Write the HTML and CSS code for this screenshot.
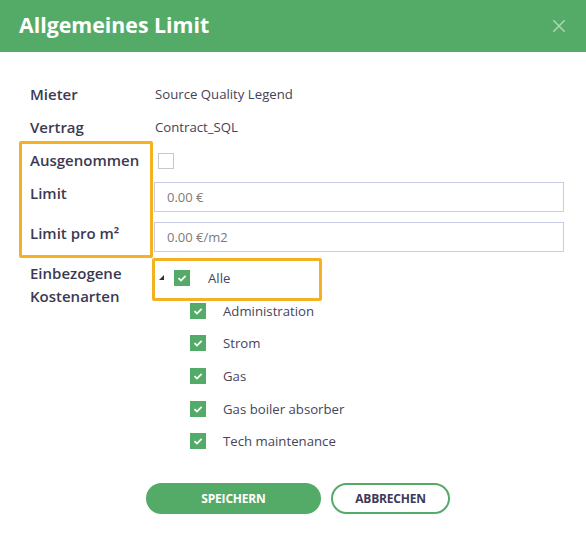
FILE: index.html
```html
<!DOCTYPE html>
<html lang="de">
<head>
<meta charset="utf-8">
<title>Allgemeines Limit</title>
<link rel="stylesheet" href="styles.css">
</head>
<body>
<div class="dialog">
  <div class="header">
    <h1 class="title">Allgemeines Limit</h1>
    <svg class="close" width="16" height="16" viewBox="0 0 16 16"><path d="M1.5 1.5 L14.5 14.5 M14.5 1.5 L1.5 14.5" stroke="currentColor" stroke-width="1.6" fill="none"/></svg>
  </div>
  <div class="form">
    <div class="row r1"><div class="label">Mieter</div><div class="value">Source Quality Legend</div></div>
    <div class="row r2"><div class="label">Vertrag</div><div class="value">Contract_SQL</div></div>
    <div class="row r3"><div class="label">Ausgenommen</div><div class="value"><span class="box"></span></div></div>
    <div class="row r4"><div class="label">Limit</div><div class="input">0.00 €</div></div>
    <div class="row r5"><div class="label">Limit pro m²</div><div class="input">0.00 €/m2</div></div>
    <div class="row r6">
      <div class="label multi">Einbezogene<br>Kostenarten</div>
      <div class="tree">
        <div class="node root"><span class="toggle"></span><span class="check"><svg viewBox="0 0 16 16"><path d="M4.5 8.2 L7 10.6 L11.6 5.8" stroke="#fff" stroke-width="1.8" fill="none"/></svg></span><span class="ntext">Alle</span></div>
        <div class="node child"><span class="check"><svg viewBox="0 0 16 16"><path d="M4.5 8.2 L7 10.6 L11.6 5.8" stroke="#fff" stroke-width="1.8" fill="none"/></svg></span><span class="ntext">Administration</span></div>
        <div class="node child"><span class="check"><svg viewBox="0 0 16 16"><path d="M4.5 8.2 L7 10.6 L11.6 5.8" stroke="#fff" stroke-width="1.8" fill="none"/></svg></span><span class="ntext">Strom</span></div>
        <div class="node child"><span class="check"><svg viewBox="0 0 16 16"><path d="M4.5 8.2 L7 10.6 L11.6 5.8" stroke="#fff" stroke-width="1.8" fill="none"/></svg></span><span class="ntext">Gas</span></div>
        <div class="node child"><span class="check"><svg viewBox="0 0 16 16"><path d="M4.5 8.2 L7 10.6 L11.6 5.8" stroke="#fff" stroke-width="1.8" fill="none"/></svg></span><span class="ntext">Gas boiler absorber</span></div>
        <div class="node child"><span class="check"><svg viewBox="0 0 16 16"><path d="M4.5 8.2 L7 10.6 L11.6 5.8" stroke="#fff" stroke-width="1.8" fill="none"/></svg></span><span class="ntext">Tech maintenance</span></div>
      </div>
    </div>
    <div class="highlight hl-labels"></div>
    <div class="highlight hl-root"></div>
  </div>
  <div class="footer">
    <button class="btn primary">SPEICHERN</button>
    <button class="btn secondary">ABBRECHEN</button>
  </div>
</div>
</body>
</html>
```
FILE: styles.css
```css
* { box-sizing: border-box; }
html, body { margin: 0; padding: 0; background: #fff; }
body { font-family: "Open Sans", "Noto Sans", sans-serif; color: #3b3a52; }
.dialog { width: 586px; height: 539px; background: #fff; overflow: hidden; }
.header {
  height: 52px; background: #54ab68; display: flex; align-items: center;
  justify-content: space-between; padding: 0 20px 0 19px;
}
.title { margin: 0; color: #fff; font-size: 21.3px; font-weight: 700; letter-spacing: 0; line-height: 1; position: relative; top: -1px; }
.close { color: rgba(255,255,255,0.55); width: 14px; height: 14px; }
.form { position: relative; padding: 25px 0 0 30px; }
.row { display: grid; grid-template-columns: 124px 410px; }
.r1, .r2, .r3 { height: 33px; align-items: center; }
.r4 { margin-top: 6px; height: 30px; }
.r5 { margin-top: 10px; height: 30px; }
.r6 { margin-top: 10px; }
.label { font-size: 15px; font-weight: 600; color: #3b3a52; line-height: 20px; }
.r4 .label { padding-top: 1px; }
.r5 .label { padding-top: 1px; }
.label.multi { line-height: 23px; }
.value { font-size: 13.2px; color: #444356; padding-left: 1px; }
.box { display: block; width: 16px; height: 16px; border: 1px solid #c9c9c9; margin-left: 3px; margin-top: 2px; }
.input {
  height: 30px; border: 1px solid #c8cce6; font-size: 13px; color: #7b7b7b;
  padding-left: 12px; display: flex; align-items: center;
}
.tree { display: flex; flex-direction: column; }
.node { height: 32.6px; display: flex; align-items: center; font-size: 13.2px; color: #46455a; }
.toggle {
  width: 0; height: 0; border-style: solid; border-width: 0 0 5px 5px;
  border-color: transparent transparent #333 transparent; margin-left: 5px; margin-right: 10px; position: relative; top: -1px;
}
.check { width: 16px; height: 16px; background: #54ab68; display: block; flex: none; }
.check svg { width: 16px; height: 16px; display: block; }
.root .ntext { margin-left: 18px; }
.child { padding-left: 36px; }
.child .ntext { margin-left: 17px; }
.highlight { position: absolute; border: 3px solid #f4b223; border-radius: 2px; pointer-events: none; }
.hl-labels { left: 19px; top: 89px; width: 134px; height: 117px; }
.hl-root { left: 152px; top: 206px; width: 170px; height: 43px; }
.footer { display: flex; justify-content: center; gap: 10px; padding-left: 10px; margin-top: 25px; }
.btn {
  height: 31px; border-radius: 16px; font-family: "Open Sans", "Noto Sans", sans-serif;
  font-size: 12px; font-weight: 700; letter-spacing: -0.2px; cursor: pointer;
}
.primary { width: 175px; background: #54ab68; border: none; color: #fff; }
.secondary { width: 119px; background: #fff; border: 2px solid #54ab68; color: #3b3a5a; }
```
